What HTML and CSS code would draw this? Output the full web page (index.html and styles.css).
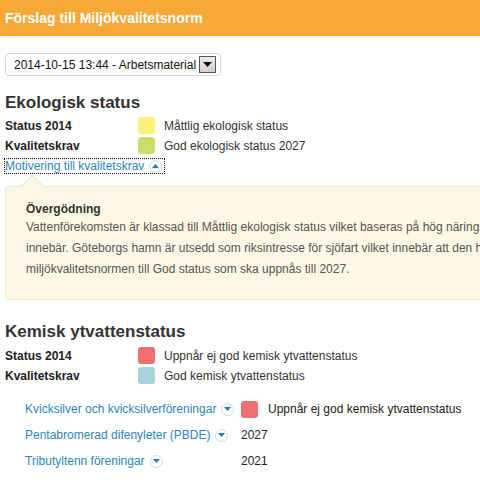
FILE: index.html
```html
<!DOCTYPE html>
<html lang="sv">
<head>
<meta charset="utf-8">
<title>Förslag till Miljökvalitetsnorm</title>
<link rel="stylesheet" href="styles.css">
</head>
<body>
<div class="page">
  <div class="header">Förslag till Miljökvalitetsnorm</div>
  <div class="content">
    <div class="select">
      <span class="select-text">2014-10-15 13:44 - Arbetsmaterial</span>
      <span class="select-btn"><svg width="9" height="5" viewBox="0 0 9 5"><path d="M0 0h9L4.5 5z" fill="#111"/></svg></span>
    </div>

    <h2 class="heading">Ekologisk status</h2>
    <div class="status-grid">
      <div class="label">Status 2014</div>
      <div class="swatch yellow"></div>
      <div class="value">Måttlig ekologisk status</div>
      <div class="label">Kvalitetskrav</div>
      <div class="swatch green"></div>
      <div class="value">God ekologisk status 2027</div>
    </div>
    <div class="toggle-row">
      <a class="toggle focused" href="#">Motivering till kvalitetskrav <span class="circle"><svg width="7" height="4" viewBox="0 0 7 4"><path d="M0 4L3.5 0 7 4z" fill="#1f7eab"/></svg></span></a>
    </div>
    <div class="callout">
      <div class="callout-title">Övergödning</div>
      <p class="callout-text">Vattenförekomsten är klassad till Måttlig ekologisk status vilket baseras på hög näringsbelastning och de effekter som detta<br>innebär. Göteborgs hamn är utsedd som riksintresse för sjöfart vilket innebär att den hamnverksamheten gör att vi sätter<br>miljökvalitetsnormen till God status som ska uppnås till 2027.</p>
    </div>

    <h2 class="heading heading-2">Kemisk ytvattenstatus</h2>
    <div class="status-grid status-grid-2">
      <div class="label">Status 2014</div>
      <div class="swatch red"></div>
      <div class="value">Uppnår ej god kemisk ytvattenstatus</div>
      <div class="label">Kvalitetskrav</div>
      <div class="swatch teal"></div>
      <div class="value">God kemisk ytvattenstatus</div>
    </div>

    <div class="substances">
      <div class="sub-name"><a class="toggle" href="#">Kvicksilver och kvicksilverföreningar <span class="circle"><svg width="7" height="4" viewBox="0 0 7 4"><path d="M0 0h7L3.5 4z" fill="#1f7eab"/></svg></span></a></div>
      <div class="sub-value"><span class="swatch red"></span>Uppnår ej god kemisk ytvattenstatus</div>
      <div class="sub-name"><a class="toggle" href="#">Pentabromerad difenyleter (PBDE) <span class="circle"><svg width="7" height="4" viewBox="0 0 7 4"><path d="M0 0h7L3.5 4z" fill="#1f7eab"/></svg></span></a></div>
      <div class="sub-value">2027</div>
      <div class="sub-name"><a class="toggle" href="#">Tributyltenn föreningar <span class="circle"><svg width="7" height="4" viewBox="0 0 7 4"><path d="M0 0h7L3.5 4z" fill="#1f7eab"/></svg></span></a></div>
      <div class="sub-value">2021</div>
    </div>
  </div>
</div>
</body>
</html>
```

FILE: styles.css
```css
html, body {
  margin: 0;
  padding: 0;
  overflow: hidden;
  background: #fff;
}
body {
  font-family: "Liberation Sans", Arial, sans-serif;
  font-size: 12px;
  color: #333;
}
.page {
  width: 720px;
}
.header {
  height: 36px;
  line-height: 36px;
  background: #f7a938;
  color: #fff;
  font-weight: bold;
  font-size: 14px;
  padding-left: 5px;
}
.content {
  padding: 0 5px;
}
.select {
  margin-top: 17px;
  width: 214px;
  height: 21px;
  border: 1px solid #d6d6d6;
  border-radius: 4px;
  display: flex;
  align-items: center;
  box-sizing: content-box;
}
.select-text {
  padding-left: 8px;
  font-size: 12px;
  color: #111;
  flex: 1;
}
.select-btn {
  width: 15px;
  height: 15px;
  margin-right: 4px;
  border: 1px solid #555;
  background: linear-gradient(#ececec, #d0d0d0);
  display: flex;
  align-items: center;
  justify-content: center;
}
.heading {
  margin: 16px 0 0;
  font-size: 17px;
  line-height: 22px;
  font-weight: bold;
  color: #333;
}
.heading-2 {
  margin-top: 21px;
}
.status-grid {
  display: grid;
  grid-template-columns: 124px 17px auto;
  column-gap: 9px;
  row-gap: 3px;
  align-items: center;
  margin-top: 3px;
}
.status-grid-2 {
  margin-top: 4px;
}
.label {
  font-weight: bold;
  color: #222;
}
.value {
  color: #333;
}
.swatch {
  display: inline-block;
  width: 17px;
  height: 17px;
  border-radius: 3px;
}
.yellow { background: #fbf27c; }
.green { background: #cedd6a; }
.red { background: #ef7070; }
.teal { background: #a6d4d7; }
.toggle-row {
  margin-top: 3px;
  height: 18px;
  display: flex;
  align-items: center;
}
.toggle {
  color: #2a87b8;
  text-decoration: none;
  display: inline-flex;
  align-items: center;
  gap: 5px;
}
.focused {
  outline: 1px dotted #111;
  outline-offset: 0;
  padding: 0 2px 0 0;
}
.circle {
  width: 13px;
  height: 13px;
  border-radius: 50%;
  border: 1px solid #cfdce3;
  background: #fff;
  display: inline-flex;
  align-items: center;
  justify-content: center;
  box-sizing: border-box;
}
.callout {
  position: relative;
  margin-top: 11px;
  background: #fdf8e6;
  border: 1px solid #efead7;
  border-radius: 3px;
  padding: 14px 20px 19px;
}
.callout::before {
  content: "";
  position: absolute;
  left: 18px;
  top: -9px;
  width: 16px;
  height: 16px;
  background: #fdf8e6;
  border-left: 1px solid #efead7;
  border-top: 1px solid #efead7;
  transform: rotate(45deg);
  transform-origin: center;
}
.callout-title {
  font-weight: bold;
  color: #333;
  line-height: 16px;
}
.callout-text {
  margin: 0;
  color: #555;
  line-height: 21px;
  white-space: nowrap;
}
.substances {
  margin-top: 12px;
  padding-left: 20px;
  display: grid;
  grid-template-columns: 216px auto;
  align-items: center;
}
.sub-name, .sub-value {
  height: 26px;
  display: flex;
  align-items: center;
}
.sub-value {
  color: #222;
  gap: 10px;
}
```
